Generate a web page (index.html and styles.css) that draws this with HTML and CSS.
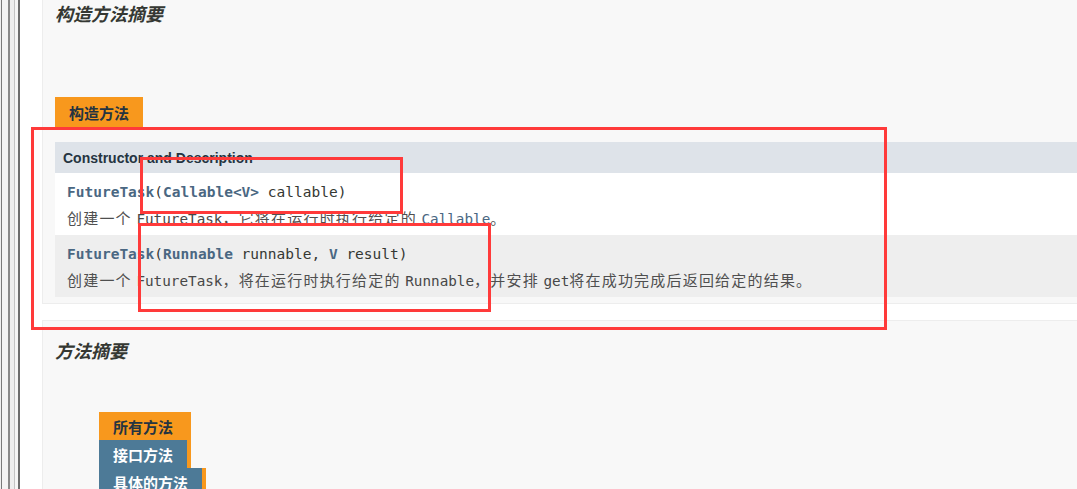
FILE: index.html
```html
<!DOCTYPE html>
<html lang="zh-CN">
<head>
    <meta charset="UTF-8">
    <title>FutureTask</title>
    <link rel="stylesheet" href="styles.css">
</head>
<body>
<div class="frame-edge">
    <span class="edge-a"></span>
    <span class="edge-line dark"></span>
    <span class="edge-b"></span>
    <span class="edge-line light"></span>
    <span class="edge-c"></span>
    <span class="edge-line darker"></span>
</div>

<div class="content">
    <div class="summary-block first">
        <h3>构造方法摘要</h3>
        <div class="caption"><span>构造方法</span></div>
        <table class="member-summary">
            <tr class="head">
                <th>Constructor and Description</th>
            </tr>
            <tr class="alt-white">
                <td>
                    <div class="sig"><a class="strong">FutureTask</a>(<a class="strong">Callable</a><a class="strong">&lt;V&gt;</a>&nbsp;callable)</div>
                    <div class="desc">创建一个 <code>FutureTask</code>，它将在运行时执行给定的 <code class="link">Callable</code>。</div>
                </td>
            </tr>
            <tr class="alt-gray">
                <td>
                    <div class="sig"><a class="strong">FutureTask</a>(<a class="strong">Runnable</a>&nbsp;runnable, <a class="strong">V</a>&nbsp;result)</div>
                    <div class="desc">创建一个 <code>FutureTask</code>，将在运行时执行给定的 <code>Runnable</code>，并安排 <code>get</code>将在成功完成后返回给定的结果。</div>
                </td>
            </tr>
        </table>
    </div>

    <div class="summary-block second">
        <h3>方法摘要</h3>
        <div class="tabs">
            <div class="tab active"><span class="label">所有方法</span><span class="tab-end"></span></div>
            <div class="tab"><span class="label">接口方法</span><span class="tab-end"></span></div>
            <div class="tab"><span class="label">具体的方法</span><span class="tab-end"></span></div>
        </div>
    </div>
</div>

<!-- annotation boxes drawn over the screenshot -->
<div class="mark mark-big"></div>
<div class="mark mark-sig"></div>
<div class="mark mark-desc"></div>
</body>
</html>
```

FILE: styles.css
```css
* {
    box-sizing: border-box;
    margin: 0;
    padding: 0;
}

body {
    position: relative;
    display: flex;
    height: 489px;
    overflow: hidden;
    background-color: #ffffff;
    font-family: "Liberation Sans", "Noto Sans CJK SC", sans-serif;
    color: #353833;
}

/* frame borders on the far left */
.frame-edge {
    display: flex;
    width: 20px;
    flex-shrink: 0;
}

.edge-a {
    width: 8px;
    background: linear-gradient(to right, #f0f0f0 1px, #7a7a7a 1px, #7a7a7a 2px, #f4f4f4 2px);
    background-size: 8px 100%;
}

.edge-line {
    width: 2px;
}

.edge-line.dark {
    background-color: #8a8a8a;
}

.edge-line.light {
    width: 1px;
    background-color: #c4c4c4;
}

.edge-line.darker {
    background-color: #6e6e6e;
}

.edge-b {
    width: 4px;
    background-color: #efefef;
}

.edge-c {
    width: 3px;
    background-color: #f6f6f6;
}

.content {
    flex: 1;
    padding-left: 22px;
}

.summary-block {
    background-color: #f8f8f8;
    border: 1px solid #ededed;
    border-right: none;
    padding-left: 12px;
}

.summary-block.first {
    border-top: none;
    height: 304px;
}

.summary-block.second {
    margin-top: 16px;
    padding-top: 16px;
    height: 200px;
}

h3 {
    font-family: "Noto Sans CJK SC", sans-serif;
    font-size: 18px;
    font-weight: bold;
    font-style: italic;
    line-height: 26px;
    color: #353833;
}

.caption {
    margin-top: 71px;
    height: 30px;
}

.caption span {
    display: inline-block;
    height: 30px;
    padding: 0 14px;
    background-color: #f8981d;
    color: #253441;
    font-family: "Noto Sans CJK SC", sans-serif;
    font-size: 15px;
    font-weight: bold;
    line-height: 31px;
}

.member-summary {
    width: 100%;
    margin-top: 15px;
    border-collapse: collapse;
}

.member-summary th {
    height: 31px;
    padding-left: 8px;
    background-color: #dee3e9;
    color: #253441;
    font-size: 14px;
    font-weight: bold;
    text-align: left;
    vertical-align: middle;
}

.member-summary td {
    height: 62px;
    padding: 7px 0 5px 12px;
    vertical-align: top;
}

.alt-white td {
    background-color: #ffffff;
}

.alt-gray td {
    background-color: #eeeeee;
}

.sig,
.desc {
    height: 25px;
    line-height: 25px;
    white-space: nowrap;
    overflow: hidden;
}

.sig {
    font-family: "DejaVu Sans Mono", monospace;
    font-size: 14.5px;
    color: #353833;
}

.sig a {
    color: #4a6782;
    text-decoration: none;
}

.strong {
    font-weight: bold;
}

.desc {
    font-family: "Noto Sans CJK SC", sans-serif;
    font-size: 15px;
    letter-spacing: 1.2px;
    color: #4f4f4f;
}

.desc code {
    font-family: "DejaVu Sans Mono", monospace;
    font-size: 14.3px;
    line-height: 1;
    letter-spacing: 0;
    color: #474747;
}

.desc code.link {
    color: #4a6782;
}

.tabs {
    margin-top: 49px;
    margin-left: 44px;
}

.tab {
    display: flex;
    height: 28px;
}

.tab .label {
    padding: 0 14px;
    background-color: #4d7a97;
    color: #ffffff;
    font-family: "Noto Sans CJK SC", sans-serif;
    font-size: 15px;
    font-weight: bold;
    line-height: 29px;
}

.tab.active .label {
    background-color: #f8981d;
    color: #253441;
}

.tab-end {
    width: 4px;
    background-color: #f8981d;
}

.mark {
    position: absolute;
    border: 3px solid #ff3a3a;
}

.mark-big {
    left: 31px;
    top: 127px;
    width: 856px;
    height: 203px;
}

.mark-sig {
    left: 140px;
    top: 157px;
    width: 263px;
    height: 57px;
}

.mark-desc {
    left: 138px;
    top: 223px;
    width: 353px;
    height: 89px;
}
```
